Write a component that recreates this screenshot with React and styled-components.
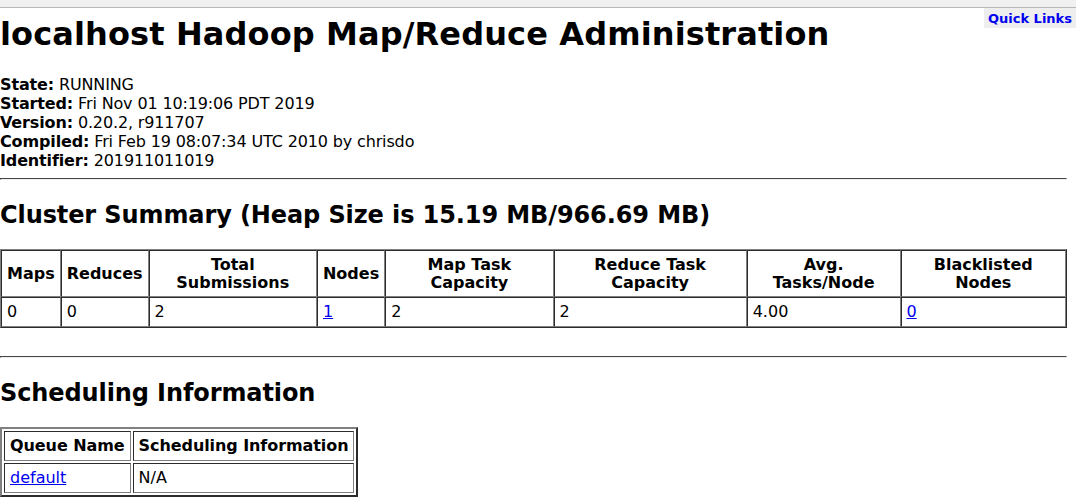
import React from "react";
import styled, { createGlobalStyle } from "styled-components";

const summary = {
  heads: [
    "Maps",
    "Reduces",
    "Total Submissions",
    "Nodes",
    "Map Task Capacity",
    "Reduce Task Capacity",
    "Avg. Tasks/Node",
    "Blacklisted Nodes",
  ],
  row: [
    { v: "0" },
    { v: "0" },
    { v: "2" },
    { v: "1", link: true },
    { v: "2" },
    { v: "2" },
    { v: "4.00" },
    { v: "0", link: true },
  ],
};

const info = [
  ["State:", "RUNNING"],
  ["Started:", "Fri Nov 01 10:19:06 PDT 2019"],
  ["Version:", "0.20.2, r911707"],
  ["Compiled:", "Fri Feb 19 08:07:34 UTC 2010 by chrisdo"],
  ["Identifier:", "201911011019"],
];

export default function App() {
  return (
    <React.Fragment>
      <GlobalStyle />
      <Root>
        <BrowserEdge />
        <QuickLinks>
          <a href="#quicklinks">Quick Links</a>
        </QuickLinks>
        <Page>
          <Title>localhost Hadoop Map/Reduce Administration</Title>
          <InfoBlock>
            {info.map(([k, v]) => (
              <div key={k}>
                <b>{k}</b> {v}
              </div>
            ))}
          </InfoBlock>
          <Rule />
          <Section>Cluster Summary (Heap Size is 15.19 MB/966.69 MB)</Section>
          <SummaryTable>
            <tbody>
              <tr>
                {summary.heads.map((h) => (
                  <SummaryHead key={h}>{h}</SummaryHead>
                ))}
              </tr>
              <tr>
                {summary.row.map((c, i) => (
                  <SummaryCell key={i}>
                    {c.link ? <Link href="#">{c.v}</Link> : c.v}
                  </SummaryCell>
                ))}
              </tr>
            </tbody>
          </SummaryTable>
          <Spacer />
          <Rule />
          <Section>Scheduling Information</Section>
          <QueueTable>
            <tbody>
              <tr>
                <QueueHead>Queue Name</QueueHead>
                <QueueHead>Scheduling Information</QueueHead>
              </tr>
              <tr>
                <QueueCell>
                  <Link href="#">default</Link>
                </QueueCell>
                <QueueCell>N/A</QueueCell>
              </tr>
            </tbody>
          </QueueTable>
        </Page>
      </Root>
    </React.Fragment>
  );
}

const GlobalStyle = createGlobalStyle`
  body {
    margin: 0;
    background: #ffffff;
    color: #000000;
    font-family: "DejaVu Sans", "Liberation Sans", sans-serif;
    font-size: 16px;
  }
`;

const Root = styled.div`
  position: relative;
  width: 1076px;
  overflow: hidden;
`;

const BrowserEdge = styled.div`
  height: 7px;
  background: #f0f0f0;
  border-bottom: 1px solid #b8b8b8;
`;

const QuickLinks = styled.div`
  position: absolute;
  top: 8px;
  right: 0;
  width: 92px;
  height: 20px;
  background: #eeeeee;
  display: flex;
  align-items: center;
  justify-content: center;

  a {
    color: #0000ee;
    font-size: 13px;
    font-weight: bold;
    text-decoration: none;
  }
`;

const Page = styled.div`
  width: 1067px;
  padding-bottom: 20px;
`;

const Title = styled.h1`
  font-size: 32px;
  font-weight: bold;
  letter-spacing: 0.12px;
  margin: 7px 0 22px;
`;

const InfoBlock = styled.div`
  letter-spacing: -0.14px;
`;

const Rule = styled.hr`
  margin: 8px 0;
  height: 0;
  border: 1px inset #eeeeee;
  border-color: #9a9a9a #eeeeee #eeeeee #9a9a9a;
`;

const Section = styled.h2`
  font-size: 24px;
  font-weight: bold;
  letter-spacing: -0.1px;
  margin: 21px 0 20px;
`;

const SummaryTable = styled.table`
  width: 100%;
  border-collapse: separate;
  border-spacing: 0;
  border: 1px outset grey;
  line-height: 17.5px;
`;

const SummaryHead = styled.th`
  padding: 5px;
  border: 1px inset grey;
  font-weight: bold;
  text-align: center;
`;

const SummaryCell = styled.td`
  padding: 5px;
  border: 1px inset grey;
`;

const Spacer = styled.div`
  height: 20px;
`;

const QueueTable = styled.table`
  border-collapse: separate;
  border-spacing: 2px;
  border: 2px outset grey;
  line-height: 18px;
`;

const QueueHead = styled.th`
  padding: 5px;
  border: 1px inset grey;
  font-weight: bold;
  letter-spacing: -0.08px;
`;

const QueueCell = styled.td`
  padding: 5px;
  border: 1px inset grey;
`;

const Link = styled.a`
  color: #0000ee;
  text-decoration: underline;
`;
